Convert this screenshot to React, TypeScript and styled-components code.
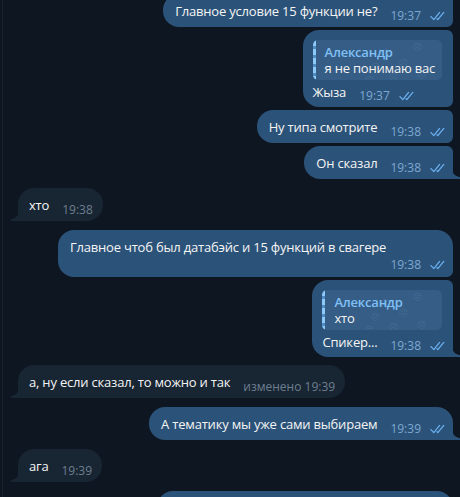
import React from 'react';
import styled, { createGlobalStyle, css } from 'styled-components';

const Global = createGlobalStyle`
  html, body { margin: 0; padding: 0; height: 100%; overflow: hidden; background: #0e1621; }
  body { font-family: "Open Sans", "Noto Sans", sans-serif; -webkit-font-smoothing: antialiased; }
`;

type Pos = 'single' | 'first' | 'middle' | 'last';

const OUT_BG = '#2b5278';
const IN_BG = '#182533';

const Page = styled.div`
  display: flex;
  height: 497px;
  padding-left: 2px;
  background: #0e1621;
  overflow: hidden;
`;

const Feed = styled.div`
  flex: 1;
  display: flex;
  flex-direction: column;
  margin-top: -6px;
  border-left: 1px solid #19232e;
`;

const Row = styled.div<{ $out: boolean; $gap: number }>`
  display: flex;
  justify-content: ${(p) => (p.$out ? 'flex-end' : 'flex-start')};
  padding: ${(p) => (p.$out ? '0 7px 0 0' : '0 0 0 15px')};
  margin-top: ${(p) => p.$gap}px;
  flex: none;
`;

const radii = (out: boolean, pos: Pos) => {
  const big = 16;
  const small = 6;
  const top = pos === 'single' || pos === 'first' ? big : small;
  const bottom = pos === 'single' || pos === 'last' ? 0 : small;
  // TL TR BR BL
  return out
    ? `${big}px ${top}px ${bottom}px ${big}px`
    : `${top}px ${big}px ${big}px ${bottom}px`;
};

const Bubble = styled.div<{ $out: boolean; $pos: Pos; $reply?: boolean; $w?: number }>`
  position: relative;
  display: flex;
  flex-direction: column;
  box-sizing: border-box;
  background: ${(p) => (p.$out ? OUT_BG : IN_BG)};
  color: #f5f5f5;
  border-radius: ${(p) => radii(p.$out, p.$pos)};
  padding: ${(p) =>
    p.$reply ? '10px 7px 3px 10px' : p.$out ? '8px 7px 3px 12px' : '8px 10px 3px 11px'};
  ${(p) => (p.$w ? `width: ${p.$w}px;` : '')}
  ${(p) =>
    (p.$pos === 'single' || p.$pos === 'last') &&
    css`
      &::after {
        content: '';
        position: absolute;
        bottom: 0;
        width: 8px;
        height: 10px;
        ${p.$out ? 'right: -7px;' : 'left: -7px;'}
        background: radial-gradient(
          circle at ${p.$out ? '100% 0' : '0 0'},
          transparent 7.5px,
          ${p.$out ? OUT_BG : IN_BG} 8.2px
        );
      }
    `}
`;

const Line = styled.div<{ $stacked?: boolean }>`
  display: flex;
  flex-direction: ${(p) => (p.$stacked ? 'column' : 'row')};
  align-items: ${(p) => (p.$stacked ? 'flex-start' : 'flex-end')};
`;

const Text = styled.span<{ $stacked?: boolean; $reply?: boolean }>`
  font-size: 13px;
  line-height: 18px;
  letter-spacing: -0.2px;
  white-space: nowrap;
  margin-bottom: ${(p) => (p.$stacked ? 0 : p.$reply ? 3 : 4)}px;
`;

const Meta = styled.span<{ $out: boolean; $stacked?: boolean }>`
  display: flex;
  align-items: center;
  gap: 9px;
  font-size: 12px;
  line-height: 16px;
  white-space: nowrap;
  color: ${(p) => (p.$out ? '#7da8d3' : '#6d7f8f')};
  margin-left: ${(p) => (p.$stacked ? 0 : 13)}px;
  ${(p) => p.$stacked && 'align-self: flex-end; margin-top: 1px; margin-bottom: 1px;'}
`;

const Quote = styled.div`
  position: relative;
  overflow: hidden;
  display: flex;
  flex-direction: column;
  margin: 0 4px 3px 0;
  padding: 4px 7px 4px 12px;
  border-radius: 5px;
  background: #355d85;
  &::before {
    content: '';
    position: absolute;
    left: 0;
    top: 0;
    bottom: 0;
    width: 3px;
    background: repeating-linear-gradient(180deg, #8cc8f8 0 6px, #4f8dc4 6px 9px);
  }
`;

const QuoteName = styled.span`
  position: relative;
  font-size: 13px;
  line-height: 16px;
  letter-spacing: -0.2px;
  font-weight: 600;
  color: #80c0f6;
`;

const QuoteText = styled.span`
  position: relative;
  font-size: 13px;
  line-height: 16px;
  letter-spacing: -0.2px;
  color: #f5f5f5;
`;

const Face = styled.span`
  position: absolute;
  font-family: "DejaVu Sans", sans-serif;
  font-size: 9px;
  line-height: 9px;
  color: rgba(170, 205, 240, 0.16);
`;

const FACES: [number, number][] = [
  [20, 3], [52, 9], [34, 19], [62, 23], [16, 31], [44, 33], [68, 36],
];

const Checks = ({ color = '#6ab0f0' }: { color?: string }) => (
  <svg width="16" height="10" viewBox="0 0 16 10" fill="none">
    <path d="M1 5.6 L3.8 8.6 L9.6 1.4" stroke={color} strokeWidth="1.3" strokeLinecap="round" strokeLinejoin="round" />
    <path d="M7 7.8 L7.8 8.6 L13.8 1.4" stroke={color} strokeWidth="1.3" strokeLinecap="round" strokeLinejoin="round" />
  </svg>
);

type Msg = {
  out: boolean;
  pos: Pos;
  gap: number;
  text: string;
  time: string;
  edited?: boolean;
  reply?: { name: string; text: string };
  stacked?: boolean;
  width?: number;
};

const messages: Msg[] = [
  { out: true, pos: 'middle', gap: 0, text: 'Главное условие 15 функции не?', time: '19:37' },
  { out: true, pos: 'middle', gap: 3, text: 'Жыза', time: '19:37', reply: { name: 'Александр', text: 'я не понимаю вас' } },
  { out: true, pos: 'middle', gap: 3, text: 'Ну типа смотрите', time: '19:38' },
  { out: true, pos: 'last', gap: 3, text: 'Он сказал', time: '19:38' },
  { out: false, pos: 'single', gap: 9, text: 'хто', time: '19:38' },
  { out: true, pos: 'first', gap: 9, text: 'Главное чтоб был датабэйс и 15 функций в свагере', time: '19:38', stacked: true, width: 395 },
  { out: true, pos: 'last', gap: 3, text: 'Спикер...', time: '19:38', reply: { name: 'Александр', text: 'хто' } },
  { out: false, pos: 'single', gap: 8, text: 'а, ну если сказал, то можно и так', time: '19:39', edited: true },
  { out: true, pos: 'single', gap: 9, text: 'А тематику мы уже сами выбираем', time: '19:39' },
  { out: false, pos: 'single', gap: 9, text: 'ага', time: '19:39' },
  { out: true, pos: 'first', gap: 9, text: 'Ну и норм', time: '19:40', width: 296 },
];

const Message = ({ m }: { m: Msg }) => (
  <Row $out={m.out} $gap={m.gap}>
    <Bubble $out={m.out} $pos={m.pos} $reply={!!m.reply} $w={m.width}>
      {m.reply && (
        <Quote>
          {FACES.map(([r, t], i) => (
            <Face key={i} style={{ right: r, top: t }}>☹</Face>
          ))}
          <QuoteName>{m.reply.name}</QuoteName>
          <QuoteText>{m.reply.text}</QuoteText>
        </Quote>
      )}
      <Line $stacked={m.stacked}>
        <Text $stacked={m.stacked} $reply={!!m.reply}>{m.text}</Text>
        <Meta $out={m.out} $stacked={m.stacked}>
          <span>{m.edited ? `изменено ${m.time}` : m.time}</span>
          {m.out && <Checks />}
        </Meta>
      </Line>
    </Bubble>
  </Row>
);

export default function App() {
  return (
    <>
      <Global />
      <Page>
        <Feed>
          {messages.map((m, i) => (
            <Message key={i} m={m} />
          ))}
        </Feed>
      </Page>
    </>
  );
}
